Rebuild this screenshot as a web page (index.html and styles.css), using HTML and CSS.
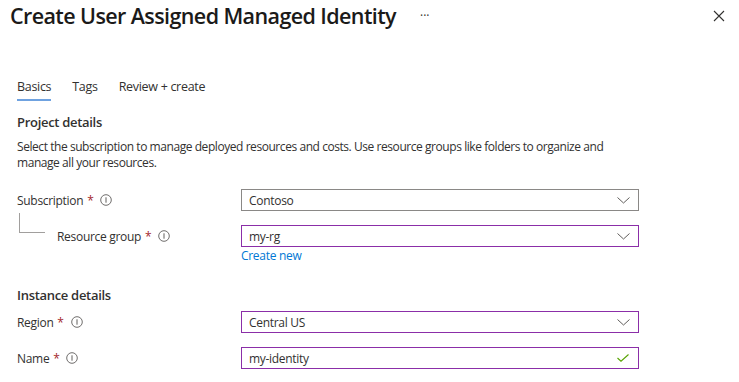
FILE: index.html
```html
<!DOCTYPE html>
<html lang="en">
<head>
<meta charset="utf-8">
<title>Create User Assigned Managed Identity</title>
<link rel="stylesheet" href="styles.css">
</head>
<body>
<div class="page">
  <header class="header">
    <h1 class="title">Create User Assigned Managed Identity</h1>
    <span class="more">···</span>
    <span class="spacer"></span>
    <button class="close" aria-label="Close">
      <svg width="12" height="12" viewBox="0 0 12 12"><path d="M1 1 L11 11 M11 1 L1 11" stroke="#323130" stroke-width="1.1" fill="none"/></svg>
    </button>
  </header>

  <nav class="tabs">
    <span class="tab active">Basics</span>
    <span class="tab">Tags</span>
    <span class="tab">Review + create</span>
  </nav>

  <h2 class="section">Project details</h2>
  <p class="desc">Select the subscription to manage deployed resources and costs. Use resource groups like folders to organize and manage all your resources.</p>

  <div class="row first">
    <div class="label">Subscription <span class="req">*</span>
      <svg class="info" width="12" height="12" viewBox="0 0 12 12"><circle cx="6" cy="6" r="5.3" stroke="#605e5c" fill="none" stroke-width="0.9"/><path d="M6 3.3 V8.7" stroke="#605e5c" stroke-width="1"/></svg>
    </div>
    <div class="field">
      <span class="value">Contoso</span>
      <svg class="chev" width="13" height="7" viewBox="0 0 13 7"><path d="M0.5 0.5 L6.5 6 L12.5 0.5" stroke="#605e5c" fill="none" stroke-width="1"/></svg>
    </div>
  </div>

  <div class="row">
    <div class="label"><span class="tree"></span>Resource group <span class="req">*</span>
      <svg class="info" width="12" height="12" viewBox="0 0 12 12"><circle cx="6" cy="6" r="5.3" stroke="#605e5c" fill="none" stroke-width="0.9"/><path d="M6 3.3 V8.7" stroke="#605e5c" stroke-width="1"/></svg>
    </div>
    <div class="fieldwrap">
      <div class="field dirty">
        <span class="value">my-rg</span>
        <svg class="chev" width="13" height="7" viewBox="0 0 13 7"><path d="M0.5 0.5 L6.5 6 L12.5 0.5" stroke="#605e5c" fill="none" stroke-width="1"/></svg>
      </div>
      <a class="link" href="#">Create new</a>
    </div>
  </div>

  <h2 class="section instance">Instance details</h2>

  <div class="row region">
    <div class="label">Region <span class="req">*</span>
      <svg class="info" width="12" height="12" viewBox="0 0 12 12"><circle cx="6" cy="6" r="5.3" stroke="#605e5c" fill="none" stroke-width="0.9"/><path d="M6 3.3 V8.7" stroke="#605e5c" stroke-width="1"/></svg>
    </div>
    <div class="field dirty">
      <span class="value">Central US</span>
      <svg class="chev" width="13" height="7" viewBox="0 0 13 7"><path d="M0.5 0.5 L6.5 6 L12.5 0.5" stroke="#605e5c" fill="none" stroke-width="1"/></svg>
    </div>
  </div>

  <div class="row">
    <div class="label">Name <span class="req">*</span>
      <svg class="info" width="12" height="12" viewBox="0 0 12 12"><circle cx="6" cy="6" r="5.3" stroke="#605e5c" fill="none" stroke-width="0.9"/><path d="M6 3.3 V8.7" stroke="#605e5c" stroke-width="1"/></svg>
    </div>
    <div class="field dirty">
      <span class="value">my-identity</span>
      <svg class="check" width="12" height="8" viewBox="0 0 12 8"><path d="M0.5 4 L4 7.2 L11.5 0.5" stroke="#57a300" fill="none" stroke-width="1.1"/></svg>
    </div>
  </div>
</div>
</body>
</html>
```

FILE: styles.css
```css
* { box-sizing: border-box; }
html, body { margin: 0; padding: 0; background: #ffffff; }
body {
  font-family: "Open Sans", "Noto Sans", sans-serif;
  font-size: 12px;
  letter-spacing: -0.3px;
  color: #323130;
  width: 739px;
  height: 382px;
  overflow: hidden;
}
.page { padding: 0 0 0 17px; }

.header {
  display: flex;
  align-items: center;
  height: 32px;
  margin-left: -7px;
  padding-right: 14px;
}
.title {
  margin: 0;
  font-size: 21.5px;
  font-weight: 600;
  line-height: 32px;
  letter-spacing: -0.6px;
  color: #1b1a19;
}
.more {
  margin-left: 24px;
  font-size: 12px;
  letter-spacing: 0;
  color: #323130;
  line-height: 32px;
}
.spacer { flex: 1; }
.close {
  border: 0;
  background: none;
  padding: 0;
  width: 12px;
  height: 12px;
  display: flex;
}

.tabs {
  display: flex;
  gap: 21px;
  margin-top: 38px;
  height: 31px;
}
.tab {
  padding-top: 7px;
  line-height: 20px;
  height: 31px;
  font-size: 12.5px;
  color: #323130;
}
.tab.active { border-bottom: 2px solid #6fa2e0; }

.section {
  margin: 11px 0 0;
  font-size: 13px;
  font-weight: 600;
  line-height: 20px;
  letter-spacing: -0.3px;
  color: #323130;
}
.desc {
  margin: 7px 0 0;
  width: 600px;
  line-height: 16px;
  font-size: 12px;
  letter-spacing: -0.44px;
}

.row {
  display: flex;
  margin-top: 14px;
}
.row.first { margin-top: 18px; }
.row.region { margin-top: 6px; }
.label {
  width: 224px;
  height: 22px;
  display: flex;
  align-items: center;
  font-size: 12px;
  white-space: pre;
}
.req { color: #a4262c; margin-left: 1px; }
.info { margin-left: 7px; }
.tree {
  align-self: flex-start;
  width: 26px;
  height: 20px;
  margin: -12px 12px 0 2px;
  border-left: 1px solid #a19f9d;
  border-bottom: 1px solid #a19f9d;
}
.fieldwrap { display: flex; flex-direction: column; }
.field {
  width: 398px;
  height: 22px;
  border: 1px solid #8a8886;
  display: flex;
  align-items: center;
  padding: 0 7px 0 7px;
  font-size: 12px;
}
.field.dirty { border-color: #8b2ea8; }
.value { flex: 1; }
.chev { margin-right: 1px; }
.check { margin-right: 2px; }
.link {
  color: #0078d4;
  text-decoration: none;
  line-height: 16px;
  height: 16px;
  font-size: 12px;
  margin-top: 1px;
}
.instance { margin-top: 21px; }
```
